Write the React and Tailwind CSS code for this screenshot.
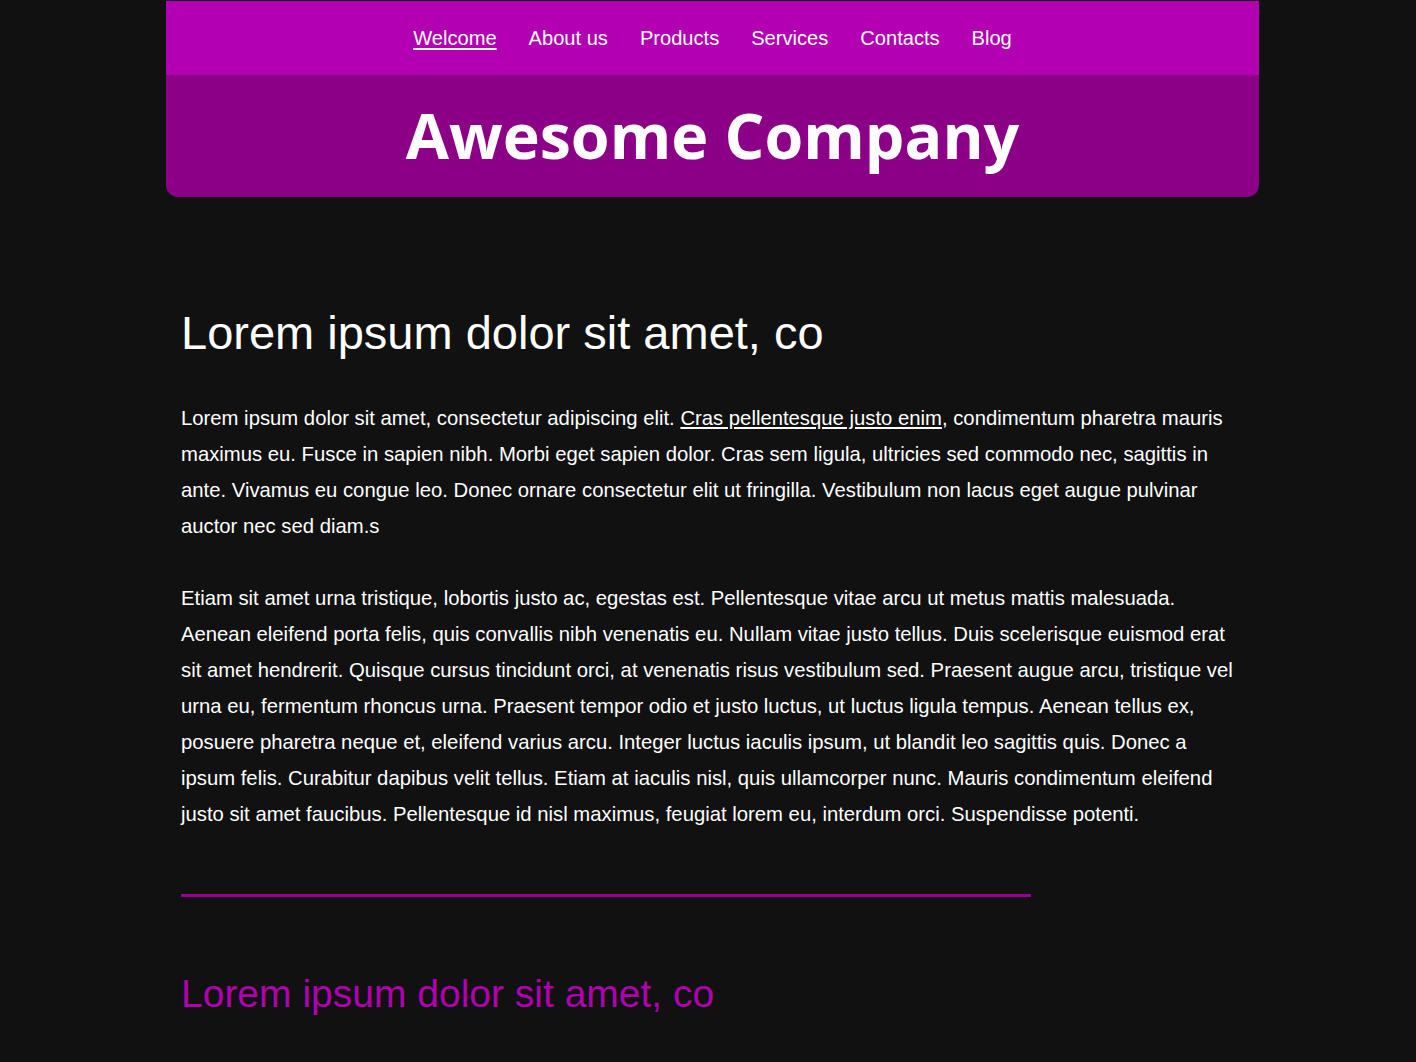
export default function App() {
  const links = ["Welcome", "About us", "Products", "Services", "Contacts", "Blog"];
  return (
    <div className="min-h-[1062px] bg-[#111111] pt-px" style={{ fontFamily: '"Liberation Sans", Arial, sans-serif' }}>
      <div className="ml-[166px] w-[1093px]">
        <header className="rounded-b-xl overflow-hidden">
          <nav className="bg-[#b300b3] h-[74px] flex items-center justify-center gap-[32px] pt-[1px]">
            {links.map((l, i) => (
              <a key={l} href="#" className={`text-white text-[20.1px] ${i === 0 ? "underline underline-offset-[3px]" : "no-underline"}`}>
                {l}
              </a>
            ))}
          </nav>
          <div className="bg-[#8b0087] h-[122px] flex items-center justify-center">
            <h1 className="text-white text-[62.7px] font-bold leading-none pb-[2px]" style={{ fontFamily: '"Open Sans", sans-serif' }}>
              Awesome Company
            </h1>
          </div>
        </header>
        <main className="px-[15px] pt-[109px] text-white">
          <h2 className="text-[47px] leading-[54px]">Lorem ipsum dolor sit amet, co</h2>
          <p className="mt-[40px] text-[20.3px] leading-[36px]">
            Lorem ipsum dolor sit amet, consectetur adipiscing elit. <a href="#" className="underline">Cras pellentesque justo enim</a>, condimentum pharetra mauris maximus eu. Fusce in sapien nibh. Morbi eget sapien dolor. Cras sem ligula, ultricies sed commodo nec, sagittis in ante. Vivamus eu congue leo. Donec ornare consectetur elit ut fringilla. Vestibulum non lacus eget augue pulvinar auctor nec sed diam.s
          </p>
          <p className="mt-[36px] text-[20.3px] leading-[36px]">
            Etiam sit amet urna tristique, lobortis justo ac, egestas est. Pellentesque vitae arcu ut metus mattis malesuada. Aenean eleifend porta felis, quis convallis nibh venenatis eu. Nullam vitae justo tellus. Duis scelerisque euismod erat sit amet hendrerit. Quisque cursus tincidunt orci, at venenatis risus vestibulum sed. Praesent augue arcu, tristique vel urna eu, fermentum rhoncus urna. Praesent tempor odio et justo luctus, ut luctus ligula tempus. Aenean tellus ex, posuere pharetra neque et, eleifend varius arcu. Integer luctus iaculis ipsum, ut blandit leo sagittis quis. Donec a ipsum felis. Curabitur dapibus velit tellus. Etiam at iaculis nisl, quis ullamcorper nunc. Mauris condimentum eleifend justo sit amet faucibus. Pellentesque id nisl maximus, feugiat lorem eu, interdum orci. Suspendisse potenti.
          </p>
          <div className="mt-[62px] h-[3px] w-[850px] bg-[#930093]" />
          <h2 className="mt-[74px] text-[39px] leading-[46px] text-[#b000b0]">Lorem ipsum dolor sit amet, co</h2>
        </main>
      </div>
    </div>
  );
}
